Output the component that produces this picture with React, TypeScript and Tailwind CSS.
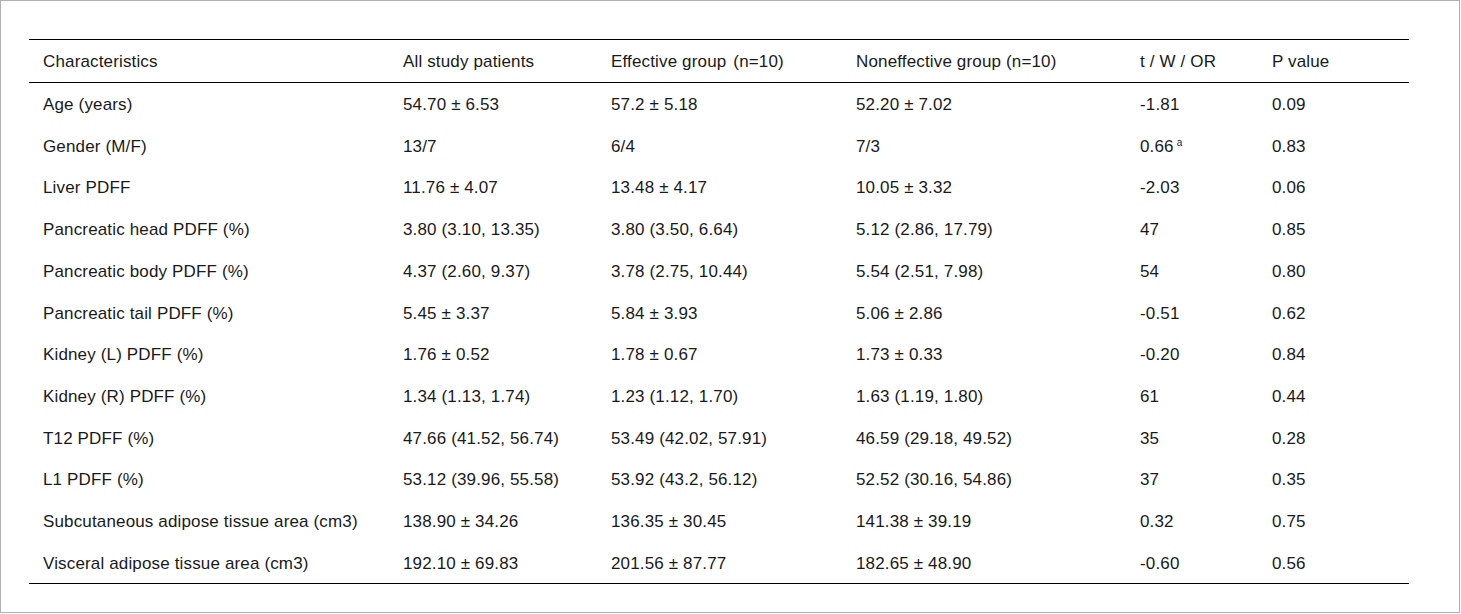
const columns = [
  { label: "Characteristics", width: "w-[360px]" },
  { label: "All study patients", width: "w-[208px]" },
  { label: "Effective group|(n=10)", width: "w-[245px]" },
  { label: "Noneffective group (n=10)", width: "w-[284px]" },
  { label: "t / W / OR", width: "w-[132px]" },
  { label: "P value", width: "w-[151px]" },
];

const rows: string[][] = [
  ["Age (years)", "54.70 ± 6.53", "57.2 ± 5.18", "52.20 ± 7.02", "-1.81", "0.09"],
  ["Gender (M/F)", "13/7", "6/4", "7/3", "0.66^a", "0.83"],
  ["Liver PDFF", "11.76 ± 4.07", "13.48 ± 4.17", "10.05 ± 3.32", "-2.03", "0.06"],
  ["Pancreatic head PDFF (%)", "3.80 (3.10, 13.35)", "3.80 (3.50, 6.64)", "5.12 (2.86, 17.79)", "47", "0.85"],
  ["Pancreatic body PDFF (%)", "4.37 (2.60, 9.37)", "3.78 (2.75, 10.44)", "5.54 (2.51, 7.98)", "54", "0.80"],
  ["Pancreatic tail PDFF (%)", "5.45 ± 3.37", "5.84 ± 3.93", "5.06 ± 2.86", "-0.51", "0.62"],
  ["Kidney (L) PDFF (%)", "1.76 ± 0.52", "1.78 ± 0.67", "1.73 ± 0.33", "-0.20", "0.84"],
  ["Kidney (R) PDFF (%)", "1.34 (1.13, 1.74)", "1.23 (1.12, 1.70)", "1.63 (1.19, 1.80)", "61", "0.44"],
  ["T12 PDFF (%)", "47.66 (41.52, 56.74)", "53.49 (42.02, 57.91)", "46.59 (29.18, 49.52)", "35", "0.28"],
  ["L1 PDFF (%)", "53.12 (39.96, 55.58)", "53.92 (43.2, 56.12)", "52.52 (30.16, 54.86)", "37", "0.35"],
  ["Subcutaneous adipose tissue area (cm3)", "138.90 ± 34.26", "136.35 ± 30.45", "141.38 ± 39.19", "0.32", "0.75"],
  ["Visceral adipose tissue area (cm3)", "192.10 ± 69.83", "201.56 ± 87.77", "182.65 ± 48.90", "-0.60", "0.56"],
];

function Cell({ value }: { value: string }) {
  // "0.66^a" -> value with footnote mark, "a|b" -> slightly wider gap
  const [main, note] = value.split("^");
  const [left, right] = main.split("|");
  return (
    <>
      {left}
      {right && <span className="ml-[7px]">{right}</span>}
      {note && <sup className="ml-[3px] text-[10px] top-[-0.6em]">{note}</sup>}
    </>
  );
}

export default function App() {
  return (
    <div className="w-[1460px] h-[613px] border border-[#b0b0b0] bg-white pt-[38px] pl-[28px] text-[#1a1a1a] font-['Liberation_Sans',Arial,sans-serif] text-[17px] tracking-[0.15px]">
      <div className="w-[1380px] border-t border-b border-black">
        {/* Header */}
        <div className="flex h-[43px] items-center border-b border-black">
          {columns.map((c) => (
            <div key={c.label} className={`${c.width} pl-[14px] pt-[2px] whitespace-pre`}>
              <Cell value={c.label} />
            </div>
          ))}
        </div>

        {/* Body */}
        {rows.map((r) => (
          <div key={r[0]} className="flex h-[41.7px] items-center">
            {r.map((v, i) => (
              <div key={i} className={`${columns[i].width} pl-[14px] pt-[2px] whitespace-pre`}>
                <Cell value={v} />
              </div>
            ))}
          </div>
        ))}
      </div>
    </div>
  );
}
